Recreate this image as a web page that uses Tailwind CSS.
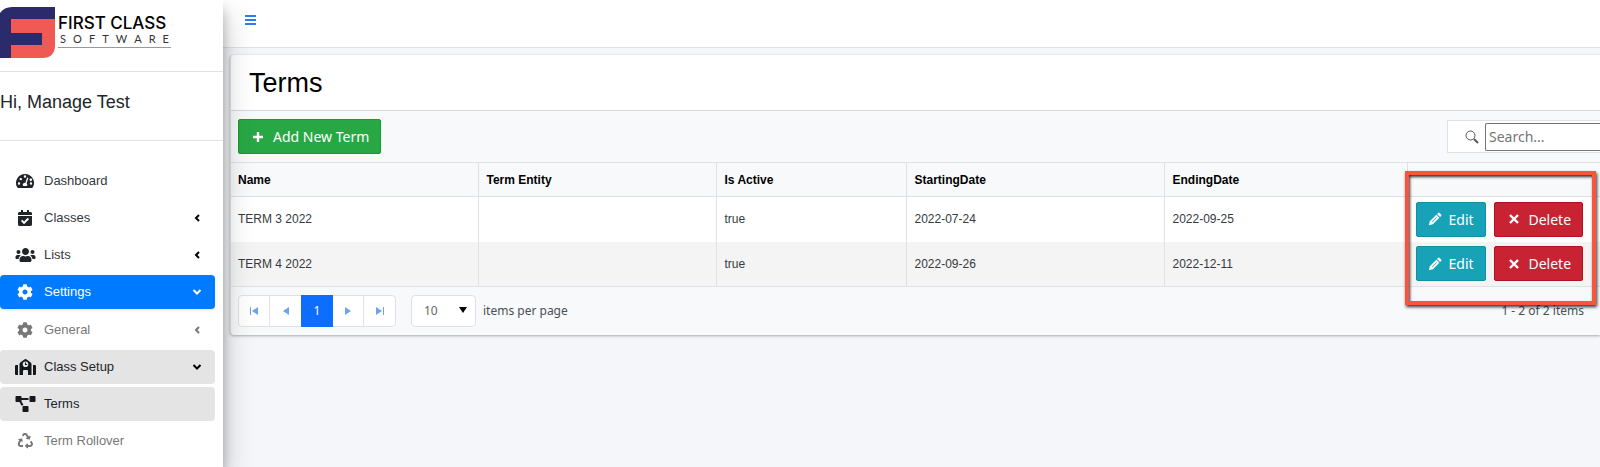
<!DOCTYPE html>
<html lang="en">
  <head>
    <meta charset="UTF-8" />
    <meta name="viewport" content="width=device-width, initial-scale=1.0" />
    <title>Terms</title>
    <!-- Tailwind CSS CDN -->
    <script src="https://cdn.jsdelivr.net/npm/@tailwindcss/browser@4"></script>
  </head>
  <body class="min-h-screen overflow-x-hidden bg-[#f4f6f9] font-['Liberation_Sans',Arial,sans-serif] text-[#212529]">
    <!-- Icon definitions -->
    <svg class="hidden">
      <symbol id="i-gauge" viewBox="0 0 18 16">
        <path fill-rule="evenodd" d="M9 1a9 9 0 0 0-7.7 13.6c.2.3.5.4.8.4h13.800c.3 0 .6-.1.8-.4A9 9 0 0 0 9 1zM9 2.300a1.200 1.200 0 1 1 0 2.400 1.200 1.200 0 0 1 0-2.400zM3 11.700a1.200 1.200 0 1 1 0-2.400 1.200 1.200 0 0 1 0 2.400zM4.800 7.300a1.200 1.200 0 1 1 0-2.400 1.200 1.200 0 0 1 0 2.400zM12.300 5.300l-1.700 5a2 2 0 0 1 .2 2.700H7.200a2 2 0 0 1 2.100-3.100l1.700-5a.7.7 0 0 1 1.300.4zM13.600 7a1.200 1.200 0 1 1 .1.300zM15 11.700a1.200 1.200 0 1 1 0-2.400 1.200 1.200 0 0 1 0 2.400z" />
      </symbol>
      <symbol id="i-calendar" viewBox="0 0 448 512">
        <path d="M436 160H12c-6.600 0-12-5.400-12-12v-36c0-26.500 21.500-48 48-48h48V12c0-6.600 5.400-12 12-12h40c6.600 0 12 5.400 12 12v52h128V12c0-6.600 5.400-12 12-12h40c6.600 0 12 5.400 12 12v52h48c26.500 0 48 21.500 48 48v36c0 6.600-5.400 12-12 12zM12 192h424c6.600 0 12 5.400 12 12v260c0 26.500-21.500 48-48 48H48c-26.500 0-48-21.500-48-48V204c0-6.600 5.400-12 12-12zm333.300 95.900l-28.200-28.400c-4.700-4.700-12.300-4.700-17-.1L194 364.700l-46-46.400c-4.700-4.700-12.300-4.700-17-.1l-28.400 28.200c-4.700 4.700-4.700 12.300-.1 17l82.600 83.300c4.700 4.700 12.300 4.700 17 .1l143.200-142c4.700-4.700 4.700-12.300 0-16.900z" />
      </symbol>
      <symbol id="i-users" viewBox="0 0 640 512">
        <path d="M96 224c35.300 0 64-28.700 64-64s-28.700-64-64-64-64 28.700-64 64 28.700 64 64 64zm448 0c35.300 0 64-28.700 64-64s-28.700-64-64-64-64 28.700-64 64 28.700 64 64 64zm32 32h-64c-17.600 0-33.500 7.100-45.100 18.600 40.300 22.100 68.900 62 75.100 109.400h66c17.700 0 32-14.300 32-32v-32c0-35.300-28.700-64-64-64zm-256 0c61.900 0 112-50.100 112-112S381.900 32 320 32 208 82.100 208 144s50.100 112 112 112zm76.800 32h-8.300c-20.800 10-43.900 16-68.500 16s-47.600-6-68.500-16h-8.300C179.600 288 128 339.600 128 403.200V432c0 26.500 21.500 48 48 48h288c26.500 0 48-21.500 48-48v-28.800c0-63.600-51.600-115.200-115.200-115.200zm-223.700-13.400C161.500 263.100 145.600 256 128 256H64c-35.300 0-64 28.700-64 64v32c0 17.700 14.300 32 32 32h65.900c6.300-47.400 34.900-87.300 75.200-109.400z" />
      </symbol>
      <symbol id="i-cog" viewBox="0 0 512 512">
        <path d="M487.400 315.700l-42.600-24.600c4.300-23.200 4.300-47 0-70.200l42.600-24.600c4.900-2.800 7.100-8.600 5.500-14-11.100-35.600-30-67.800-54.700-94.600-3.800-4.100-10-5.100-14.800-2.300L380.800 110c-17.900-15.400-38.500-27.300-60.800-35.100V25.800c0-5.600-3.900-10.500-9.400-11.700-36.700-8.200-74.300-7.800-109.200 0-5.500 1.200-9.400 6.100-9.400 11.700V75c-22.200 7.900-42.800 19.800-60.800 35.100L88.700 85.500c-4.900-2.800-11-1.900-14.800 2.300-24.700 26.700-43.600 58.900-54.700 94.600-1.700 5.400.6 11.200 5.500 14L67.300 221c-4.300 23.200-4.300 47 0 70.200l-42.600 24.600c-4.900 2.800-7.100 8.600-5.500 14 11.100 35.600 30 67.800 54.700 94.600 3.800 4.100 10 5.100 14.800 2.300l42.600-24.600c17.900 15.400 38.500 27.300 60.800 35.100v49.200c0 5.600 3.900 10.500 9.400 11.700 36.700 8.200 74.300 7.800 109.200 0 5.500-1.200 9.400-6.100 9.400-11.700v-49.200c22.200-7.900 42.800-19.800 60.800-35.100l42.600 24.600c4.900 2.800 11 1.900 14.800-2.300 24.700-26.700 43.600-58.900 54.700-94.600 1.500-5.500-.7-11.300-5.600-14.100zM256 336c-44.100 0-80-35.900-80-80s35.900-80 80-80 80 35.900 80 80-35.900 80-80 80z" />
      </symbol>
      <symbol id="i-school" viewBox="0 0 21 16">
        <path d="M0 7a1 1 0 0 1 1-1h2v10H1a1 1 0 0 1-1-1zM18 6h2a1 1 0 0 1 1 1v8a1 1 0 0 1-1 1h-2z" />
        <path fill-rule="evenodd" d="M10.500 0a2 2 0 0 1 1.200.4l4 3A2 2 0 0 1 16.500 5v11h-3.500v-4a1 1 0 0 0-1-1H9a1 1 0 0 0-1 1v4H4.500V5a2 2 0 0 1 .8-1.600l4-3A2 2 0 0 1 10.500 0zM10.500 2.500a2.800 2.800 0 1 0 0 5.600 2.800 2.800 0 0 0 0-5.600z" />
        <path d="M10 3.500h1v1.500h1.200v1H10z" />
      </symbol>
      <symbol id="i-diagram" viewBox="0 0 640 512">
        <path d="M384 320H256c-17.700 0-32 14.300-32 32v128c0 17.700 14.300 32 32 32h128c17.700 0 32-14.300 32-32V352c0-17.700-14.300-32-32-32zM192 32c0-17.700-14.300-32-32-32H32C14.300 0 0 14.300 0 32v128c0 17.700 14.300 32 32 32h95.700l73.200 128C212 301 232.400 288 256 288h.3L192 175.500V128h224V64H192V32zM608 0H480c-17.700 0-32 14.300-32 32v128c0 17.700 14.300 32 32 32h128c17.700 0 32-14.300 32-32V32c0-17.700-14.300-32-32-32z" />
      </symbol>
      <symbol id="i-recycle" viewBox="0 0 512 512">
        <path d="M184.600 261.900c3 13-9.900 23.500-21.300 18.100l-29.200-13.900-41 65.500c-13.400 21.300 2 49 27.100 49H180c6.600 0 12 5.400 12 12v40c0 6.600-5.400 12-12 12h-60c-75.300 0-121.300-83-81.300-147l39.900-63.900-28.400-13.500c-11.700-5.600-9.900-22.600 2.700-25.500l96.400-22.200c8-1.900 16 3.100 17.900 11.100zM283.100 79l41.600 66.500-28.600 17.500c-11 6.800-8.300 23.500 4.400 26.500l95.700 22.300c8.100 1.900 16.200-3.100 18-11.200l22.200-96.400c2.900-12.600-10.900-22.500-21.900-15.700l-35.400 21.700-41.700-65.100c-37.500-60-125-60-162.500 0l-11.900 19.100c-3.500 5.600-1.800 13 3.800 16.500l33.900 21.200c5.600 3.500 13 1.800 16.500-3.800l11.800-18.900c12.500-20.100 41.600-20 54.100-.2zM497.300 301.200l-26.500-42.400c-3.500-5.600-10.900-7.300-16.500-3.800l-33.900 21.200c-5.600 3.500-7.300 10.900-3.800 16.500l24.300 38.900c13.300 21.300-2 49-27.100 49H352v-32c0-14.200-17.300-21.400-27.300-11.300l-64 64c-6.200 6.200-6.200 16.400 0 22.600l64 64c10.100 10.100 27.300 2.900 27.300-11.300v-32h64.400c74.900 0 121.100-82.500 80.900-143.400z" />
      </symbol>
      <symbol id="i-left" viewBox="0 0 8 10"><path d="M6 2L3 5l3 3" fill="none" stroke="currentColor" stroke-width="2" /></symbol>
      <symbol id="i-down" viewBox="0 0 10 8"><path d="M1.500 2L5 5.500 8.500 2" fill="none" stroke="currentColor" stroke-width="2" /></symbol>
      <symbol id="i-pencil" viewBox="0 0 16 16">
        <path fill-rule="evenodd" d="M1 15l1-4.500L9.500 3 13 6.500 5.500 14zM10.300 2.200l1.200-1.200a1.200 1.200 0 0 1 1.700 0L15 2.800a1.200 1.200 0 0 1 0 1.700l-1.200 1.200zM4.500 11.100l.5.500 5-5-.5-.5z" />
      </symbol>
      <symbol id="i-x" viewBox="0 0 12 12"><path d="M2 2l8 8M10 2l-8 8" stroke="currentColor" stroke-width="2.400" /></symbol>
    </svg>

    <div class="flex min-h-screen">
      <!-- Sidebar -->
      <aside class="relative z-10 w-[223px] shrink-0 bg-white shadow-[0_14px_28px_rgba(0,0,0,0.25),0_10px_10px_rgba(0,0,0,0.22)]">
        <a href="#" class="flex h-[72px] items-start gap-[3px] border-b border-[#dee2e6] pt-[7px]">
          <svg class="h-[51px] w-[55px]" viewBox="0 0 55 51">
            <path d="M11 12h44v26q0 13-13 13H11z" fill="#f15a54" />
            <path d="M0 6Q4 0 12 0h43v12H11v14h31v12H11v13H0z" fill="#2b2a6b" />
          </svg>
          <span class="mt-[7px] block w-[113px] border-b border-[#999] pb-px text-black">
            <span class="block text-[17px] leading-[18px] font-medium whitespace-nowrap font-['Inter',sans-serif]">FIRST CLASS</span>
            <span class="flex justify-between px-[2px] text-[11px] leading-[14px] text-[#333] font-['Lato',sans-serif]">
              <span>S</span><span>O</span><span>F</span><span>T</span><span>W</span><span>A</span><span>R</span><span>E</span>
            </span>
          </span>
        </a>
        <div class="h-[69px] border-b border-[#dee2e6] pt-[17px] text-lg leading-[26px]">Hi, Manage Test</div>

        <nav class="pt-[23px] pr-2 text-[13px] text-[#343a40]">
          <ul class="space-y-[3px]">
            <li>
              <a href="#" class="flex h-[34px] items-center rounded pr-[13px] pl-4">
                <svg class="mr-[10px] h-4 w-[18px] fill-[#212529]"><use href="#i-gauge" /></svg>
                <span class="flex-1">Dashboard</span>
              </a>
            </li>
            <li>
              <a href="#" class="flex h-[34px] items-center rounded pr-[13px] pl-4">
                <svg class="mr-[10px] h-4 w-[18px] fill-[#212529]"><use href="#i-calendar" /></svg>
                <span class="flex-1">Classes</span>
                <svg class="h-[10px] w-[10px] text-black"><use href="#i-left" /></svg>
              </a>
            </li>
            <li>
              <a href="#" class="flex h-[34px] items-center rounded pr-[13px] pl-4">
                <svg class="mr-2 -ml-px h-4 w-[21px] fill-[#212529]"><use href="#i-users" /></svg>
                <span class="flex-1">Lists</span>
                <svg class="h-[10px] w-[10px] text-black"><use href="#i-left" /></svg>
              </a>
            </li>
            <li>
              <a href="#" class="flex h-[34px] items-center rounded bg-[#007bff] pr-[13px] pl-4 text-white shadow-sm">
                <svg class="mr-[10px] h-4 w-[18px] fill-white"><use href="#i-cog" /></svg>
                <span class="flex-1">Settings</span>
                <svg class="h-[10px] w-[10px]"><use href="#i-down" /></svg>
              </a>
              <ul class="mt-1 space-y-[3px]">
                <li>
                  <a href="#" class="flex h-[34px] items-center rounded pr-[13px] pl-4 text-[#777]">
                    <svg class="mr-[10px] h-4 w-[18px] fill-[#777]"><use href="#i-cog" /></svg>
                    <span class="flex-1">General</span>
                    <svg class="h-[10px] w-[10px]"><use href="#i-left" /></svg>
                  </a>
                </li>
                <li>
                  <a href="#" class="flex h-[34px] items-center rounded bg-[#e4e4e4] pr-[13px] pl-4 text-[#212529]">
                    <svg class="mr-2 -ml-px h-4 w-[21px] fill-[#16181b]"><use href="#i-school" /></svg>
                    <span class="flex-1">Class Setup</span>
                    <svg class="h-[10px] w-[10px] text-black"><use href="#i-down" /></svg>
                  </a>
                  <ul class="mt-[3px] space-y-[3px]">
                    <li>
                      <a href="#" class="flex h-[34px] items-center rounded bg-[#e4e4e4] pr-[13px] pl-4 text-[#212529]">
                        <svg class="mr-2 -ml-px h-4 w-[21px] fill-[#16181b]"><use href="#i-diagram" /></svg>
                        <span class="flex-1">Terms</span>
                      </a>
                    </li>
                    <li>
                      <a href="#" class="flex h-[34px] items-center rounded pr-[13px] pl-4 text-[#777]">
                        <svg class="mr-[10px] h-4 w-[18px] fill-[#777]"><use href="#i-recycle" /></svg>
                        <span class="flex-1">Term Rollover</span>
                      </a>
                    </li>
                  </ul>
                </li>
              </ul>
            </li>
          </ul>
        </nav>
      </aside>

      <!-- Main content -->
      <div class="min-w-0 flex-1">
        <header class="h-12 border-b border-[#dee2e6] bg-white px-[22px] pt-[14px]">
          <button type="button" aria-label="Toggle menu" class="block text-[#2f7bf6]">
            <svg class="h-3 w-[11px]" viewBox="0 0 11 12" fill="currentColor">
              <path d="M0 1h11v2H0zM0 5h11v2H0zM0 9h11v2H0z" />
            </svg>
          </button>
        </header>

        <main class="pt-[7px] pl-[7px]">
          <section class="relative rounded-l border-l border-[#dee2e6] bg-[#f8f9fb] shadow-[0_0_1px_rgba(0,0,0,0.125),0_1px_3px_rgba(0,0,0,0.3)]">
            <h1 class="h-[56px] rounded-tl border-b border-[#d5d9de] bg-white pt-3 pl-[18px] text-[27px] leading-8 text-black">Terms</h1>

            <!-- Toolbar -->
            <div class="flex h-[51px] items-center justify-between pl-[7px] font-['Noto_Sans','Segoe_UI',sans-serif]">
              <button type="button" class="flex h-[35px] w-[143px] items-center rounded-xs border border-[#159f24] bg-[#28a745] pl-[13px] text-[14px] text-white">
                <svg class="mr-[9px] h-3 w-3" viewBox="0 0 12 12"><path d="M6 1v10M1 6h10" stroke="currentColor" stroke-width="2.400" /></svg>
                Add New Term
              </button>
              <label class="flex h-[33px] w-[153px] items-center border border-r-0 border-[#dee2e6] bg-white pl-[17px]">
                <svg class="mr-[6px] h-[14px] w-[14px] shrink-0" viewBox="0 0 14 14" fill="none" stroke="#555">
                  <circle cx="5.500" cy="5.500" r="4.500" />
                  <path d="M9 9l4 4" stroke-width="2" />
                </svg>
                <input type="text" placeholder="Search..." aria-label="Search" class="h-7 min-w-0 flex-1 rounded-l-xs border border-r-0 border-[#767676] pl-[3px] text-[14px] placeholder:text-[#757575]" />
              </label>
            </div>

            <!-- Terms table -->
            <table class="w-full table-fixed text-left text-[12px]">
              <thead>
                <tr class="h-[34px] border-y border-[#dee2e6] text-black">
                  <th class="w-[247px] border-r border-[#dee2e6] px-[7px]">Name</th>
                  <th class="w-[238px] border-r border-[#dee2e6] px-2">Term Entity</th>
                  <th class="w-[190px] border-r border-[#dee2e6] px-2">Is Active</th>
                  <th class="w-[258px] border-r border-[#dee2e6] px-2">StartingDate</th>
                  <th class="w-[243px] border-r border-[#dee2e6] px-2">EndingDate</th>
                  <th class="w-[193px] px-2"></th>
                </tr>
              </thead>
              <tbody id="terms-body"></tbody>
            </table>

            <!-- Pager -->
            <div class="flex h-12 items-center pr-4 pl-[7px] text-[12px] text-[#495057] font-['Noto_Sans','Segoe_UI',sans-serif]">
              <div class="flex h-8 rounded border border-[#dee2e6] bg-white text-[#6ba3f7]">
                <button type="button" aria-label="First page" class="flex w-[31px] items-center justify-center border-r border-[#dee2e6]">
                  <svg class="h-2 w-2 fill-current" viewBox="0 0 8 8"><path d="M0 0h1v8H0zM8 0v8L2 4z" /></svg>
                </button>
                <button type="button" aria-label="Previous page" class="flex w-[31px] items-center justify-center">
                  <svg class="h-2 w-2 fill-current" viewBox="0 0 8 8"><path d="M7 0v8L1 4z" /></svg>
                </button>
                <button type="button" class="-my-px w-8 bg-[#0d6efd] text-white">1</button>
                <button type="button" aria-label="Next page" class="flex w-[31px] items-center justify-center border-r border-[#dee2e6]">
                  <svg class="h-2 w-2 fill-current" viewBox="0 0 8 8"><path d="M1 0v8l6-4z" /></svg>
                </button>
                <button type="button" aria-label="Last page" class="flex w-[31px] items-center justify-center">
                  <svg class="h-2 w-2 fill-current" viewBox="0 0 8 8"><path d="M7 0h1v8H7zM0 0v8l6-4z" /></svg>
                </button>
              </div>
              <div class="relative ml-[15px]">
                <select id="page-size" class="h-8 w-[65px] appearance-none rounded border border-[#dee2e6] bg-white pl-3 text-[#666]">
                  <option>10</option>
                  <option>20</option>
                  <option>50</option>
                </select>
                <svg class="pointer-events-none absolute top-3 right-[9px] h-[6px] w-2" viewBox="0 0 8 6"><path d="M0 0h8L4 6z" /></svg>
              </div>
              <label for="page-size" class="ml-[7px]">items per page</label>
              <span class="ml-auto">1 - 2 of 2 items</span>
            </div>

            <!-- Highlight around the row actions -->
            <div class="pointer-events-none absolute top-[116px] right-1 h-[134px] w-[191px] border-4 border-[#f9543f] shadow-[1px_2px_3px_rgba(0,0,0,0.8),inset_1px_2px_3px_rgba(0,0,0,0.8)]"></div>
          </section>
        </main>
      </div>
    </div>

    <script>
      const terms = [
        { name: "TERM 3 2022", entity: "", active: true, start: "2022-07-24", end: "2022-09-25" },
        { name: "TERM 4 2022", entity: "", active: true, start: "2022-09-26", end: "2022-12-11" },
      ];

      // Render table rows
      const body = document.getElementById("terms-body");
      terms.forEach((t) => {
        const row = document.createElement("tr");
        row.className = "h-[45px] bg-white text-[#343a40] even:bg-[#f4f4f4] last:border-b last:border-[#dee2e6]";
        [t.name, t.entity, t.active, t.start, t.end].forEach((value) => {
          const td = document.createElement("td");
          td.className = "border-r border-[#dee2e6] px-2 first:px-[7px]";
          td.textContent = value;
          row.appendChild(td);
        });
        const actions = document.createElement("td");
        actions.className = "pl-2 font-['Noto_Sans','Segoe_UI',sans-serif]";
        actions.innerHTML = `
          <div class="flex gap-2 text-[14px] text-white">
            <button type="button" class="flex h-[35px] w-[70px] items-center rounded-xs border border-[#138fa2] bg-[#17a2b8] pl-[11px]">
              <svg class="mr-[7px] h-[14px] w-[14px] fill-current"><use href="#i-pencil" /></svg>Edit
            </button>
            <button type="button" class="flex h-[35px] w-[89px] items-center rounded-xs border border-[#b5101f] bg-[#c82333] pl-[13px]">
              <svg class="mr-[9px] h-3 w-3"><use href="#i-x" /></svg>Delete
            </button>
          </div>`;
        row.appendChild(actions);
        body.appendChild(row);
      });
    </script>
  </body>
</html>
